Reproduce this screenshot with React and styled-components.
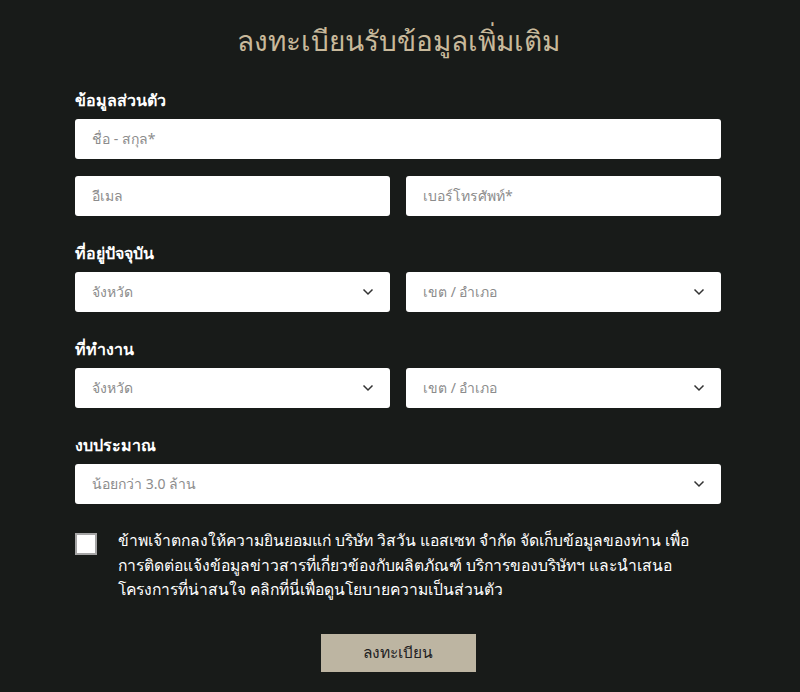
import styled, { createGlobalStyle } from "styled-components"

const Global = createGlobalStyle`
  html, body {
    margin: 0;
    padding: 0;
    background: #181b19;
  }
  body {
    font-family: "Noto Sans", "DejaVu Sans", sans-serif;
  }
`

const Page = styled.div`
  width: 800px;
  height: 692px;
  background: #181b19;
  box-sizing: border-box;
  padding: 20px 79px 0 75px;
  overflow: hidden;
`

const Title = styled.h1`
  margin: 0 0 30px;
  text-align: center;
  color: #c8b99b;
  font-size: 28px;
  font-weight: 400;
  line-height: 40px;
`

const Section = styled.div`
  display: flex;
  flex-direction: column;
  gap: 17px;
  & + & {
    margin-top: 27px;
  }
`

const Label = styled.div`
  color: #fff;
  font-size: 16px;
  font-weight: 600;
  line-height: 20px;
  margin-bottom: -8px;
`

const Row = styled.div`
  display: grid;
  grid-template-columns: ${(p) => (p.$cols === 2 ? "1fr 1fr" : "1fr")};
  gap: 16px;
`

const Field = styled.div`
  height: 40px;
  background: #fff;
  border-radius: 3px;
  display: flex;
  align-items: center;
  justify-content: space-between;
  padding: 0 16px 0 17px;
  box-sizing: border-box;
  color: #8c8c8c;
  font-size: 14px;
`

const Chevron = () => (
  <svg width="12" height="8" viewBox="0 0 12 8" fill="none">
    <path d="M1.5 1.5l4.5 4.5 4.5-4.5" stroke="#333" strokeWidth="1.5" />
  </svg>
)

const Consent = styled.div`
  display: flex;
  gap: 21px;
  margin-top: 24px;
`

const Box = styled.div`
  width: 22px;
  height: 22px;
  flex: none;
  box-sizing: border-box;
  background: #fff;
  border: 2px solid #a5a5a5;
  margin-top: 5px;
`

const ConsentText = styled.p`
  margin: 0;
  color: #fff;
  font-size: 15.7px;
  line-height: 24.5px;
  font-weight: 500;
  white-space: nowrap;
`

const Submit = styled.button`
  display: block;
  margin: 32px auto 0;
  width: 155px;
  height: 38px;
  border: none;
  background: #bdb5a2;
  color: #222;
  font-family: inherit;
  font-size: 15.5px;
`

const Select = ({ children }) => (
  <Field>
    <span>{children}</span>
    <Chevron />
  </Field>
)

export default function App() {
  return (
    <Page>
      <Global />
      <Title>ลงทะเบียนรับข้อมูลเพิ่มเติม</Title>
      <Section>
        <Label>ข้อมูลส่วนตัว</Label>
        <Row>
          <Field>ชื่อ - สกุล*</Field>
        </Row>
        <Row $cols={2}>
          <Field>อีเมล</Field>
          <Field>เบอร์โทรศัพท์*</Field>
        </Row>
      </Section>
      <Section>
        <Label>ที่อยู่ปัจจุบัน</Label>
        <Row $cols={2}>
          <Select>จังหวัด</Select>
          <Select>เขต / อำเภอ</Select>
        </Row>
      </Section>
      <Section>
        <Label>ที่ทำงาน</Label>
        <Row $cols={2}>
          <Select>จังหวัด</Select>
          <Select>เขต / อำเภอ</Select>
        </Row>
      </Section>
      <Section>
        <Label>งบประมาณ</Label>
        <Row>
          <Select>น้อยกว่า 3.0 ล้าน</Select>
        </Row>
      </Section>
      <Consent>
        <Box />
        <ConsentText>
          ข้าพเจ้าตกลงให้ความยินยอมแก่ บริษัท วิสวัน แอสเซท จำกัด จัดเก็บข้อมูลของท่าน เพื่อ
          <br />
          การติดต่อแจ้งข้อมูลข่าวสารที่เกี่ยวข้องกับผลิตภัณฑ์ บริการของบริษัทฯ และนำเสนอ
          <br />
          โครงการที่น่าสนใจ คลิกที่นี่เพื่อดูนโยบายความเป็นส่วนตัว
        </ConsentText>
      </Consent>
      <Submit>ลงทะเบียน</Submit>
    </Page>
  )
}
